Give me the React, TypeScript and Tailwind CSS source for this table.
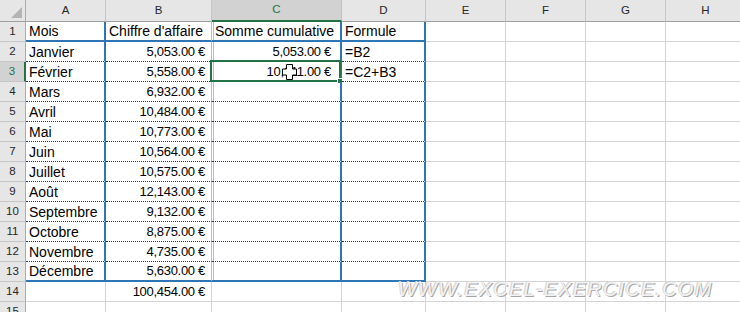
import React from "react";

const cols = ["A", "B", "C", "D", "E", "F", "G", "H"];
const widths = ["w-[80px]", "w-[106px]", "w-[130px]", "w-[84px]", "w-[80px]", "w-[80px]", "w-[80px]", "w-[80px]"];

// A, B, C, D for rows 1..15
const data: string[][] = [
  ["Mois", "Chiffre d'affaire", "Somme cumulative", "Formule"],
  ["Janvier", "5,053.00 €", "5,053.00 €", "=B2"],
  ["Février", "5,558.00 €", "10,611.00 €", "=C2+B3"],
  ["Mars", "6,932.00 €", "", ""],
  ["Avril", "10,484.00 €", "", ""],
  ["Mai", "10,773.00 €", "", ""],
  ["Juin", "10,564.00 €", "", ""],
  ["Juillet", "10,575.00 €", "", ""],
  ["Août", "12,143.00 €", "", ""],
  ["Septembre", "9,132.00 €", "", ""],
  ["Octobre", "8,875.00 €", "", ""],
  ["Novembre", "4,735.00 €", "", ""],
  ["Décembre", "5,630.00 €", "", ""],
  ["", "100,454.00 €", "", ""],
  ["", "", "", ""],
];

function cellBorders(row: number, col: number) {
  const inTable = row <= 13 && col <= 3;
  let b = "border-b border-b-[#d4d4d4]";
  let r = "border-r border-r-[#d4d4d4]";
  if (inTable) {
    b =
      row === 1 || row === 13
        ? "border-b-2 border-b-[#2e75b6]"
        : "border-b border-b-[#203864] [border-bottom-style:dotted]";
    r =
      col === 1
        ? "border-r border-r-[#ffc000]"
        : "border-r-2 border-r-[#2e75b6]";
  }
  // second yellow stripe of the double line, drawn inside column C
  const extra = inTable && col === 2 ? "shadow-[inset_1px_0_0_#ffffff,inset_2px_0_0_#ffc000]" : "";
  return `${b} ${r} ${extra}`;
}

function padding(row: number, col: number, isNum: boolean) {
  if (!isNum) return "justify-start pl-[3px]";
  if (col === 1) return "justify-end pr-[6px]";
  return "justify-end pr-[9px]";
}

function Cursor() {
  return (
    <svg className="absolute left-[282px] top-[64px]" width="15" height="16" viewBox="0 0 15 16">
      <path
        d="M4.5 0.5 H10.5 V5 H14.5 V11 H10.5 V15.5 H4.5 V11 H0.5 V5 H4.5 Z"
        fill="#ffffff"
        stroke="#000000"
        strokeWidth="1"
      />
    </svg>
  );
}

export default function App() {
  return (
    <div className="relative w-[740px] h-[312px] overflow-hidden bg-white font-['Liberation_Sans',Arial,sans-serif] text-black">
      {/* column headers */}
      <div className="flex h-[22px]">
        <div className="relative w-[26px] shrink-0 bg-[#e6e6e6] border-r border-r-[#ababab] border-b border-b-[#9f9f9f]">
          <svg className="absolute left-0 top-0" width="25" height="21" viewBox="0 0 25 21">
            <polygon points="11,18 22,18 22,7" fill="#b4b4b4" />
          </svg>
        </div>
        {cols.map((c, i) =>
          c === "C" ? (
            <div
              key={c}
              className={`${widths[i]} shrink-0 flex items-center justify-center bg-[#d2d2d2] border-r border-r-[#c0c0c0] border-b-2 border-b-[#217346] text-[11.5px] text-[#217346]`}
            >
              {c}
            </div>
          ) : (
            <div
              key={c}
              className={`${widths[i]} shrink-0 flex items-center justify-center bg-[#e6e6e6] border-r border-r-[#c6c6c6] border-b border-b-[#9f9f9f] text-[11.5px] text-[#262626]`}
            >
              {c}
            </div>
          )
        )}
      </div>

      {data.map((vals, idx) => {
        const row = idx + 1;
        const selRow = row === 3;
        return (
          <div key={row} className="flex h-[20px]">
            <div
              className={`w-[26px] shrink-0 flex items-center justify-center border-b border-b-[#c6c6c6] text-[11.5px] ${
                selRow
                  ? "bg-[#d2d2d2] text-[#217346] border-r-2 border-r-[#217346]"
                  : "bg-[#e6e6e6] text-[#262626] border-r border-r-[#ababab]"
              }`}
            >
              {row}
            </div>
            {cols.map((c, col) => {
              const v = col <= 3 ? vals[col] : "";
              const isNum = v.includes("€");
              const selected = row === 3 && col === 2;
              return (
                <div
                  key={c}
                  className={`${widths[col]} relative shrink-0 flex items-end ${cellBorders(row, col)} ${padding(
                    row,
                    col,
                    isNum
                  )}`}
                >
                  {v && (
                    <span
                      className={`whitespace-nowrap leading-[16px] pb-[1px] ${
                        isNum ? "text-[13px] tracking-[-0.3px]" : "text-[14px]"
                      }`}
                    >
                      {v}
                    </span>
                  )}
                  {selected && (
                    <div className="absolute -left-[2px] -top-[2px] -right-[1px] -bottom-[1px] border-2 border-[#217346]">
                      <div className="absolute -right-[4px] -bottom-[4px] w-[6px] h-[6px] bg-[#217346] border border-white" />
                    </div>
                  )}
                </div>
              );
            })}
          </div>
        );
      })}

      <Cursor />

      <div className="absolute left-[398px] top-[279px] text-[20px] leading-[20px] italic tracking-[1.2px] whitespace-nowrap text-[#f2f2f2] [text-shadow:1px_1px_0_#a6a6a6,-1px_-1px_0_#d6d6d6]">
        WWW.EXCEL-EXERCICE.COM
      </div>
    </div>
  );
}
